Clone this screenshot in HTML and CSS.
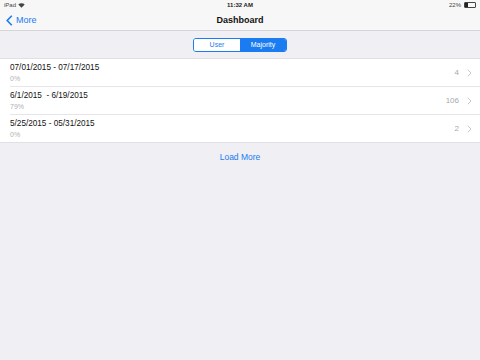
FILE: index.html
```html
<!DOCTYPE html>
<html lang="en">
<head>
  <meta charset="UTF-8">
  <title>Dashboard</title>
  <link rel="stylesheet" href="styles.css">
</head>
<body>
  <div class="top">
    <div class="status">
      <div class="status-left">iPad
        <svg width="7" height="5" viewBox="0 0 7 5"><path d="M0.3 1.6 A4.6 4.6 0 0 1 6.7 1.6 L3.5 4.8 Z" fill="#444"/></svg>
      </div>
      <div class="status-time">11:32 AM</div>
      <div class="status-right">22%
        <span class="battery"><span class="battery-level"></span></span>
      </div>
    </div>
    <div class="navbar">
      <a class="back">
        <svg width="7" height="11" viewBox="0 0 7 11"><path d="M5.8 0.8 L1.2 5.5 L5.8 10.2" fill="none" stroke="#1a7cf0" stroke-width="1.6"/></svg>
        More
      </a>
      <div class="title">Dashboard</div>
    </div>
  </div>

  <div class="segment-wrap">
    <div class="segment">
      <div class="seg">User</div>
      <div class="seg active">Majority</div>
    </div>
  </div>

  <div class="list">
    <div class="row">
      <div class="row-text">
        <div class="row-title">07/01/2015 - 07/17/2015</div>
        <div class="row-sub">0%</div>
      </div>
      <div class="row-count">4</div>
      <svg class="chev" width="5" height="8" viewBox="0 0 5 8"><path d="M0.8 0.8 L4 4 L0.8 7.2" fill="none" stroke="#c7c7cc" stroke-width="1"/></svg>
    </div>
    <div class="row">
      <div class="row-text">
        <div class="row-title">6/1/2015&nbsp; - 6/19/2015</div>
        <div class="row-sub">79%</div>
      </div>
      <div class="row-count">106</div>
      <svg class="chev" width="5" height="8" viewBox="0 0 5 8"><path d="M0.8 0.8 L4 4 L0.8 7.2" fill="none" stroke="#c7c7cc" stroke-width="1"/></svg>
    </div>
    <div class="row">
      <div class="row-text">
        <div class="row-title">5/25/2015 - 05/31/2015</div>
        <div class="row-sub">0%</div>
      </div>
      <div class="row-count">2</div>
      <svg class="chev" width="5" height="8" viewBox="0 0 5 8"><path d="M0.8 0.8 L4 4 L0.8 7.2" fill="none" stroke="#c7c7cc" stroke-width="1"/></svg>
    </div>
  </div>

  <div class="load-more">Load More</div>
</body>
</html>
```

FILE: styles.css
```css
body {
  margin: 0;
  font-family: "Liberation Sans", Arial, sans-serif;
  background-color: #efeff4;
  color: #111;
  width: 480px;
  height: 360px;
  overflow: hidden;
}
.top {
  background-color: #f7f7f8;
  border-bottom: 1px solid #d6d6da;
}
.status {
  height: 10px;
  display: flex;
  align-items: center;
  justify-content: space-between;
  padding: 0 4px;
  font-size: 6px;
  color: #444;
  position: relative;
}
.status-left,
.status-right {
  display: flex;
  align-items: center;
  gap: 2px;
}
.status-time {
  position: absolute;
  left: 0;
  right: 0;
  text-align: center;
  font-weight: bold;
  color: #222;
}
.battery {
  display: inline-block;
  width: 10px;
  height: 4px;
  border: 1px solid #444;
  border-radius: 1px;
  margin-left: 1px;
}
.battery-level {
  display: block;
  width: 3px;
  height: 4px;
  background-color: #222;
}
.navbar {
  height: 20px;
  display: flex;
  align-items: center;
  position: relative;
}
.back {
  display: flex;
  align-items: center;
  gap: 3px;
  padding-left: 6px;
  color: #1a7cf0;
  font-size: 9px;
}
.title {
  position: absolute;
  left: 0;
  right: 0;
  text-align: center;
  font-size: 9px;
  font-weight: bold;
  color: #111;
}
.segment-wrap {
  display: flex;
  justify-content: center;
  padding: 7px 0 6px;
}
.segment {
  display: flex;
  border: 1px solid #1a7cf0;
  border-radius: 3px;
  overflow: hidden;
}
.seg {
  width: 46px;
  height: 12px;
  line-height: 12px;
  text-align: center;
  font-size: 7px;
  color: #1a7cf0;
  background-color: #fff;
}
.seg.active {
  background-color: #1a7cf0;
  color: #fff;
}
.list {
  background-color: #fff;
  border-top: 1px solid #e0e0e4;
  border-bottom: 1px solid #e0e0e4;
}
.row {
  height: 27px;
  display: flex;
  align-items: center;
  margin-left: 10px;
  padding-right: 8px;
  border-bottom: 1px solid #e6e6ea;
}
.row:last-child {
  border-bottom: none;
}
.row-text {
  flex: 1;
}
.row-title {
  font-size: 8.2px;
  color: #111;
}
.row-sub {
  font-size: 7px;
  color: #b0b0b4;
  margin-top: 3px;
}
.row-count {
  font-size: 8px;
  color: #a8a8ac;
  margin-right: 8px;
}
.load-more {
  text-align: center;
  color: #1a7cf0;
  font-size: 8.5px;
  padding-top: 9px;
}
```
